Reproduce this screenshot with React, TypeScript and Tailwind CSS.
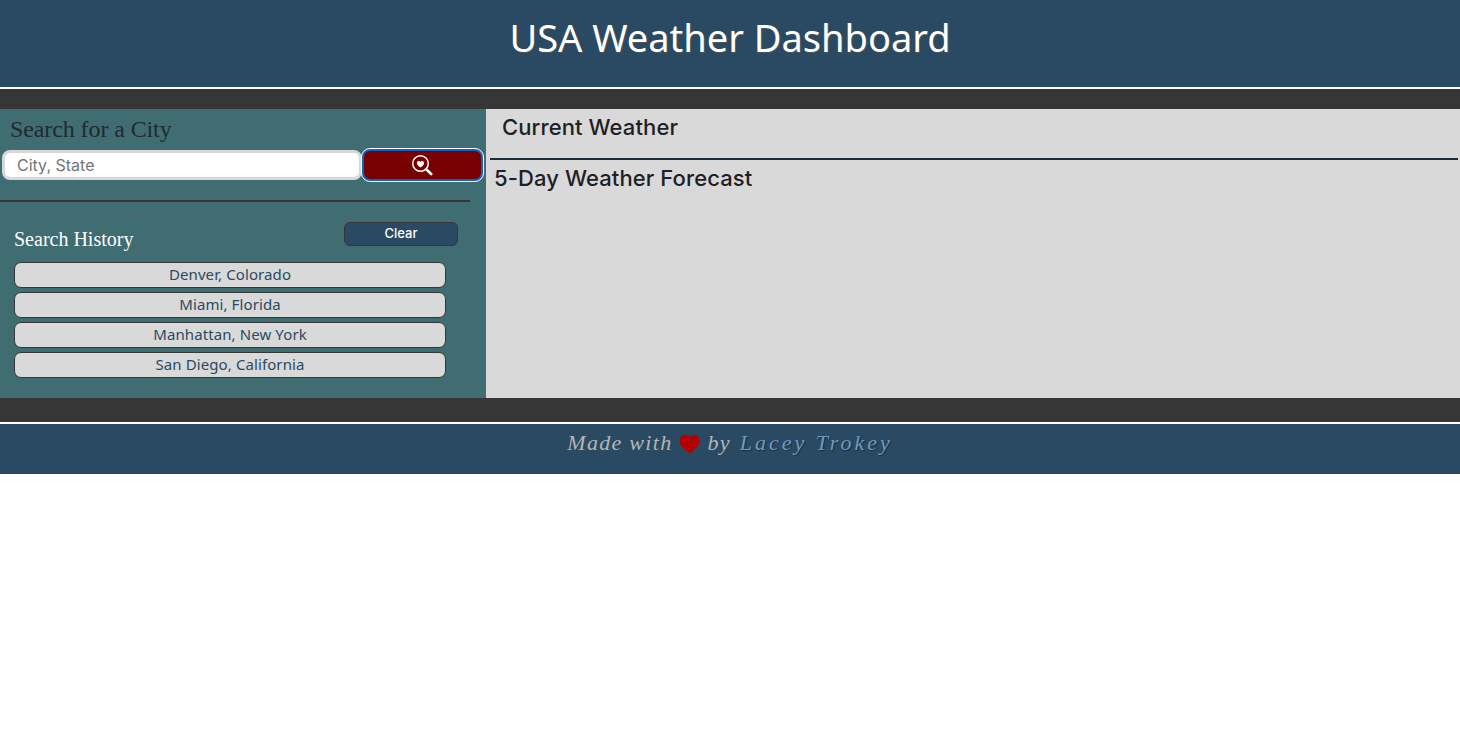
const cities = ['Denver, Colorado', 'Miami, Florida', 'Manhattan, New York', 'San Diego, California'];

const SearchIcon = () => (
  <svg width="22" height="22" viewBox="0 0 22 22" fill="none" className="-ml-[2px]" aria-hidden="true">
    <circle cx="9.5" cy="9.5" r="7.8" stroke="white" strokeWidth="1.5" />
    <path d="M15.2 15.2 20.2 20" stroke="white" strokeWidth="2.6" strokeLinecap="round" />
    <path d="M9.5 13.6C7.6 12.2 5.9 10.9 5.9 9.1C5.9 7.9 6.8 7 7.9 7C8.6 7 9.2 7.4 9.5 8C9.8 7.4 10.4 7 11.1 7C12.2 7 13.1 7.9 13.1 9.1C13.1 10.9 11.4 12.2 9.5 13.6Z" fill="white" />
  </svg>
);

const Heart = () => (
  <svg width="21" height="20" viewBox="0 0 21 20" className="mx-[7px] inline-block align-[-4px]" aria-hidden="true">
    <path d="M10.5 19.5C7 16.6 0.5 12.6 0.5 6.6C0.5 3.2 3 0.8 5.8 0.8C7.9 0.8 9.6 1.9 10.5 3.6C11.4 1.9 13.1 0.8 15.2 0.8C18 0.8 20.5 3.2 20.5 6.6C20.5 12.6 14 16.6 10.5 19.5Z" fill="#b20000" />
  </svg>
);

export default function App() {
  return (
    <div className="min-h-[752px] bg-white font-['Inter',sans-serif]">
      <header className="h-[89px] border-b-2 border-white bg-[#2a4a63] pt-[11px] text-center">
        <h1 className="font-['Noto_Sans',sans-serif] text-[38px] leading-[52px] text-white [text-shadow:1px_1px_1px_#555555]">
          USA Weather Dashboard
        </h1>
      </header>

      <div className="h-[20px] bg-[#363636]" />

      <main className="flex h-[289px]">
        <aside className="w-[486px] shrink-0 bg-[#3f6d71]">
          <h2 className="pl-[10px] pt-[6px] font-['Liberation_Serif',serif] text-[24px] leading-[28px] tracking-[-0.1px] text-[#1f2a30]">
            Search for a City
          </h2>
          <div className="mt-[7px] flex pl-[2px]">
            <input
              placeholder="City, State"
              className="h-[30px] w-[360px] rounded-[8px] border-[3px] border-[#d8d8d8] bg-white pl-[12px] font-['Inter',sans-serif] text-[16px] text-[#333333] outline-none placeholder:text-[#757575]"
            />
            <button className="flex h-[32px] w-[121px] -translate-y-px items-center justify-center rounded-[8px] border-[2px] border-[#0a63c9] bg-[#780000] outline outline-1 outline-white">
              <SearchIcon />
            </button>
          </div>
          <div className="mt-[18px] h-[2px] w-[470px] bg-[#363636]" />
          <div className="flex items-start justify-between pl-[14px] pr-[28px] pt-[20px]">
            <h3 className="pt-[5px] font-['Liberation_Serif',serif] text-[20px] leading-[24px] text-white">Search History</h3>
            <button className="h-[24px] w-[114px] rounded-[6px] border border-[#363636] bg-[#2a4a63] text-[13px] font-medium text-white">
              Clear
            </button>
          </div>
          <ul className="ml-[14px] mt-[11px] flex w-[432px] flex-col gap-[4px]">
            {cities.map((city) => (
              <li key={city}>
                <button className="h-[26px] w-full rounded-[7px] border border-[#363636] bg-[#d9d9d9] pb-[2px] font-['Noto_Sans',sans-serif] text-[15px] leading-[22px] tracking-[0.1px] text-[#2a4a63]">
                  {city}
                </button>
              </li>
            ))}
          </ul>
        </aside>

        <section className="flex-1 bg-[#d9d9d9] text-[#1d2125]">
          <h2 className="pl-[16px] pt-[4px] text-[22px] font-medium leading-[28px] tracking-[0.1px]">Current Weather</h2>
          <div className="ml-[4px] mr-[2px] mt-[17px] h-[2px] bg-[#1b2c3a]" />
          <h2 className="pl-[8px] pt-[4px] text-[22px] font-medium leading-[28px] tracking-[0.1px]">5-Day Weather Forecast</h2>
        </section>
      </main>

      <div className="h-[24px] bg-[#363636]" />

      <footer className="h-[52px] border-t-2 border-white bg-[#2a4a63] pt-[5px] text-center font-['Liberation_Serif',serif] text-[22px] italic leading-[28px] tracking-[1.3px] text-[#b5b5b5]">
        Made with
        <Heart />
        by{' '}
        <span className="ml-[2px] tracking-[3px] text-[#6b9cc0] [text-shadow:1px_1px_1px_#1b2c3a]">Lacey Trokey</span>
      </footer>
    </div>
  );
}
